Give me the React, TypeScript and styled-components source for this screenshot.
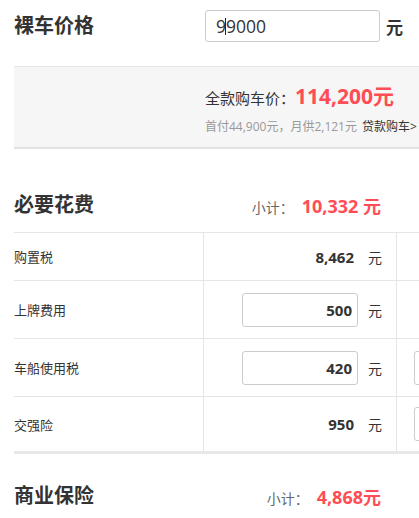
import styled, { createGlobalStyle } from "styled-components";

const Global = createGlobalStyle`
  body {
    margin: 0;
    overflow: hidden;
    background: #fff;
    font-family: "Open Sans", "Noto Sans CJK SC", sans-serif;
    color: #333;
  }
`;

const RED = "#ff4d55";

const Page = styled.div`
  width: 760px;
  padding-left: 14px;
`;

const TopRow = styled.div`
  display: grid;
  grid-template-columns: 191px 175px auto;
  align-items: center;
  padding-top: 10px;
`;

const Title = styled.h2`
  margin: 0;
  font-size: 20px;
  font-weight: 700;
  line-height: 28px;
  color: #333;
`;

const InputWrap = styled.div`
  position: relative;
`;

const PriceInput = styled.input`
  box-sizing: border-box;
  width: 175px;
  height: 32px;
  border: 1px solid #ccc;
  border-radius: 3px;
  padding: 0 10px;
  font-family: "Open Sans", sans-serif;
  font-size: 17.5px;
  color: #333;
  outline: none;
  display: block;
`;

// text caret sitting after the first digit
const Caret = styled.span`
  position: absolute;
  left: 20px;
  top: 8px;
  width: 1px;
  height: 17px;
  background: #222;
`;

const Unit = styled.span<{ $bold?: boolean }>`
  font-size: ${(p) => (p.$bold ? "17px" : "14px")};
  font-weight: ${(p) => (p.$bold ? 700 : 400)};
  color: #333;
  margin-left: ${(p) => (p.$bold ? "6px" : "0")};
`;

const Summary = styled.div`
  margin-top: 24px;
  height: 80px;
  background: #f6f6f6;
  border-top: 1px solid #e6e6e6;
  border-bottom: 2px solid #e2e2e2;
  padding-left: 191px;
  display: flex;
  flex-direction: column;
  justify-content: center;
  gap: 4px;
`;

const TotalLine = styled.div`
  display: flex;
  align-items: baseline;
  font-size: 15px;
  color: #333;
`;

const BigRed = styled.span<{ $size: number }>`
  color: ${RED};
  font-weight: 700;
  font-size: ${(p) => p.$size}px;
`;

const SubLine = styled.div`
  font-size: 12px;
  color: #999;
  padding-top: 3px;
  a {
    color: #333;
    text-decoration: none;
    margin-left: 5px;
  }
`;

const SectionHead = styled.div<{ $top: number; $bottom: number }>`
  display: flex;
  align-items: center;
  width: 367px;
  padding-top: ${(p) => p.$top}px;
  padding-bottom: ${(p) => p.$bottom}px;
`;

const Subtotal = styled.div`
  margin-left: auto;
  display: flex;
  align-items: baseline;
  gap: 8px;
  font-size: 14px;
  color: #666;
`;

const Table = styled.div`
  border-top: 1px solid #e5e5e5;
  border-bottom: 3px solid #e8e8e8;
`;

const Row = styled.div<{ $h: number; $last?: boolean }>`
  display: grid;
  grid-template-columns: 190px 193px 1fr;
  height: ${(p) => p.$h}px;
  border-bottom: ${(p) => (p.$last ? "none" : "1px solid #e5e5e5")};
`;

const Cell = styled.div`
  display: flex;
  align-items: center;
  border-right: 1px solid #e5e5e5;
`;

const Label = styled(Cell)`
  font-size: 13px;
  color: #333;
`;

const ValueCell = styled(Cell)`
  padding-left: 38px;
  gap: 10px;
`;

const Value = styled.span`
  box-sizing: border-box;
  width: 116px;
  text-align: right;
  padding-right: 4px;
  font-size: 15px;
  font-weight: 700;
  color: #333;
`;

const FeeInput = styled.input`
  box-sizing: border-box;
  width: 116px;
  height: 34px;
  border: 1px solid #ccc;
  border-radius: 3px;
  text-align: right;
  padding: 0 5px;
  font-family: "Open Sans", sans-serif;
  font-size: 15px;
  font-weight: 700;
  color: #333;
  outline: none;
`;

const ExtraCell = styled.div`
  display: flex;
  align-items: center;
  padding-left: 17px;
`;

type Fee = { label: string; value: string; editable: boolean; extra: boolean; h: number };

const fees: Fee[] = [
  { label: "购置税", value: "8,462", editable: false, extra: false, h: 47 },
  { label: "上牌费用", value: "500", editable: true, extra: false, h: 57 },
  { label: "车船使用税", value: "420", editable: true, extra: true, h: 57 },
  { label: "交强险", value: "950", editable: false, extra: true, h: 54 },
];

export default function App() {
  return (
    <>
      <Global />
      <Page>
        <TopRow>
          <Title>裸车价格</Title>
          <InputWrap>
            <PriceInput defaultValue="99000" />
            <Caret />
          </InputWrap>
          <Unit $bold>元</Unit>
        </TopRow>

        <Summary>
          <TotalLine>
            全款购车价：<BigRed $size={21}>114,200元</BigRed>
          </TotalLine>
          <SubLine>
            首付44,900元，月供2,121元<a href="#">贷款购车&gt;</a>
          </SubLine>
        </Summary>

        <SectionHead $top={42} $bottom={13}>
          <Title>必要花费</Title>
          <Subtotal>
            小计：<BigRed $size={18}>10,332 元</BigRed>
          </Subtotal>
        </SectionHead>

        <Table>
          {fees.map((f, i) => (
            <Row key={f.label} $h={f.h} $last={i === fees.length - 1}>
              <Label>{f.label}</Label>
              <ValueCell>
                {f.editable ? <FeeInput defaultValue={f.value} /> : <Value>{f.value}</Value>}
                <Unit>元</Unit>
              </ValueCell>
              <ExtraCell>{f.extra && <FeeInput defaultValue="" />}</ExtraCell>
            </Row>
          ))}
        </Table>

        <SectionHead $top={28} $bottom={20}>
          <Title>商业保险</Title>
          <Subtotal>
            小计：<BigRed $size={18}>4,868元</BigRed>
          </Subtotal>
        </SectionHead>
      </Page>
    </>
  );
}
